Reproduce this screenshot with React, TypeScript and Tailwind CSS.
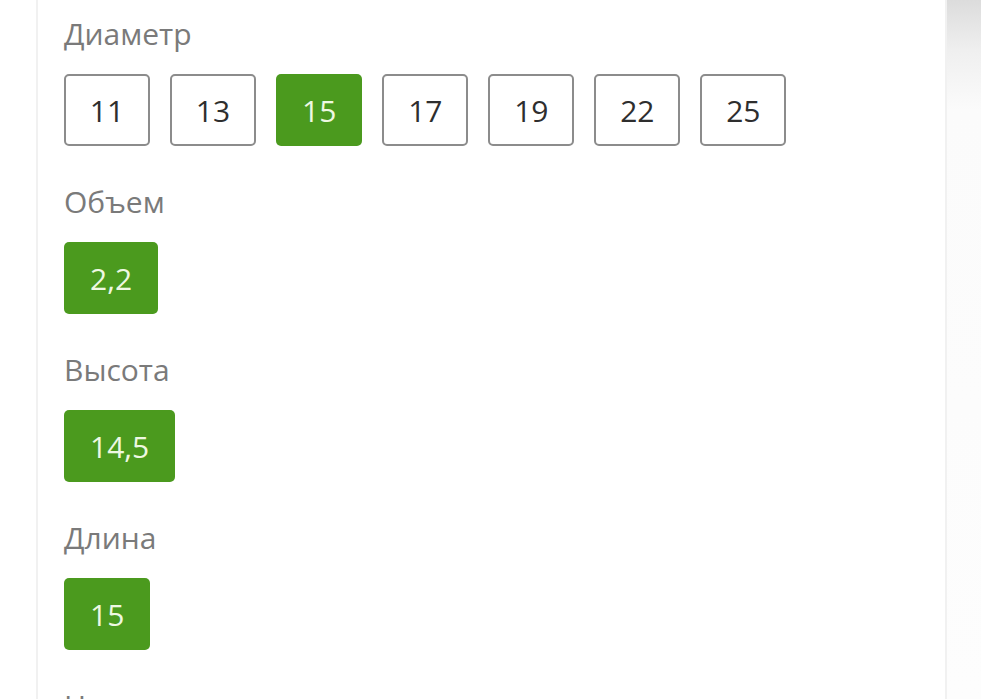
const groups = [
  { title: "Диаметр", values: ["11", "13", "15", "17", "19", "22", "25"], active: "15" },
  { title: "Объем", values: ["2,2"], active: "2,2" },
  { title: "Высота", values: ["14,5"], active: "14,5" },
  { title: "Длина", values: ["15"], active: "15" },
  { title: "Назначение", values: [], active: "" },
];

const App = () => {
  return (
    <div
      className="flex w-[981px] h-[699px] overflow-hidden bg-white"
      style={{ fontFamily: '"Open Sans", "Noto Sans", sans-serif' }}
    >
      <div className="w-[36px] shrink-0" />
      <div className="w-[911px] shrink-0 border-x-2 border-[#f1f1f1] pl-[26px] pt-[14px]">
        {groups.map((group) => (
          <div key={group.title} className="mb-[36px]">
            <div className="text-[30px] leading-[40px] text-[#7a7a7a] mb-[20px]">{group.title}</div>
            <div className="flex gap-[20px]">
              {group.values.map((v) =>
                v === group.active ? (
                  <div
                    key={v}
                    className="h-[72px] min-w-[86px] px-[26px] flex items-center justify-center rounded-[5px] bg-[#4b9a1e] text-[#eef8e2] text-[30px]"
                  >
                    {v}
                  </div>
                ) : (
                  <div
                    key={v}
                    className="h-[72px] w-[86px] flex items-center justify-center rounded-[5px] border-2 border-[#8c8c8c] text-[#2e2e2e] text-[30px]"
                  >
                    {v}
                  </div>
                )
              )}
            </div>
          </div>
        ))}
      </div>
      <div className="flex-1 bg-[linear-gradient(to_bottom,#dcdcdc_0%,#efefef_50px,#fbfbfb_110px,#fdfdfd_100%)]" />
    </div>
  );
};

export default App;
